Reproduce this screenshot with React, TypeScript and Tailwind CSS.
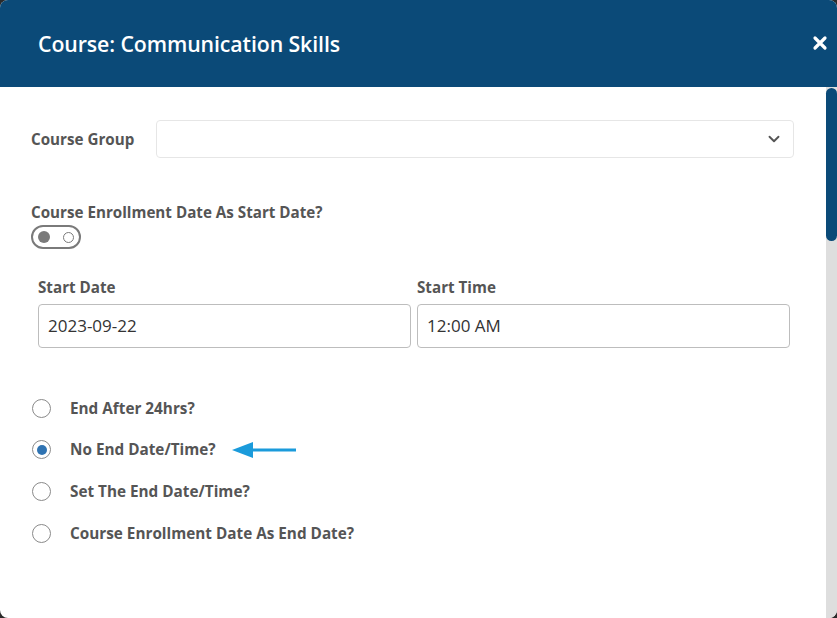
import { ChevronDown } from "lucide-react";

const font = "font-['Open_Sans',sans-serif]";

function Header() {
  return (
    <div className="bg-[#0b4a78] h-[87px] flex items-center justify-between pl-[38px] pr-[9px] shrink-0">
      <h1 className="text-white text-[21.3px] font-semibold tracking-[-0.1px]">Course: Communication Skills</h1>
      <svg width="16" height="16" viewBox="0 0 16 16" className="mb-[2px]">
        <path d="M3 3 L13 13 M13 3 L3 13" stroke="#fff" strokeWidth="3.2" strokeLinecap="round" />
      </svg>
    </div>
  );
}

function Toggle() {
  return (
    <div className="w-[50px] h-[24px] rounded-full border-2 border-[#7a7a7a] flex items-center justify-between px-[5px]">
      <span className="size-[12px] rounded-full bg-[#7a7a7a]" />
      <span className="size-[11px] rounded-full border-[1.5px] border-[#7a7a7a]" />
    </div>
  );
}

function TextField({ label, value }: { label: string; value: string }) {
  return (
    <div className="flex flex-col flex-1">
      <label className="text-[15.2px] font-bold text-[#555] leading-[20px]">{label}</label>
      <div className="mt-[7px] h-[44px] border border-[#bdbdbd] rounded-[4px] flex items-center px-[9px] text-[17px] text-[#333]">
        {value}
      </div>
    </div>
  );
}

function Radio({ label, checked }: { label: string; checked?: boolean }) {
  return (
    <div className="flex items-center h-[20px]">
      <span className="size-[19px] rounded-full border border-[#8a8a8a] flex items-center justify-center shrink-0">
        {checked && <span className="size-[10px] rounded-full bg-[#2f73b2]" />}
      </span>
      <span className="ml-[19px] text-[15.3px] font-bold text-[#555]">{label}</span>
      {checked && (
        <svg width="66" height="18" viewBox="0 0 66 18" className="ml-[16px]">
          <path d="M18 9 H64" stroke="#1b9bdb" strokeWidth="3" />
          <path d="M0 9 L21 1 L21 17 Z" fill="#1b9bdb" />
        </svg>
      )}
    </div>
  );
}

function Body() {
  return (
    <div className="flex flex-1 min-h-0">
      <div className="flex-1 pl-[31px] pr-[32px] pt-[33px]">
        <div className="flex items-center h-[38px]">
          <span className="w-[125px] text-[15.2px] font-bold text-[#555]">Course Group</span>
          <div className="flex-1 h-[38px] border border-[#e6e6e6] rounded-[4px] flex items-center justify-end pr-[10px]">
            <ChevronDown size={18} strokeWidth={2.5} color="#555" />
          </div>
        </div>
        <div className="mt-[44px] text-[15.2px] font-bold text-[#555] leading-[20px]">Course Enrollment Date As Start Date?</div>
        <div className="mt-[3px]">
          <Toggle />
        </div>
        <div className="mt-[28px] flex gap-[6px] pl-[7px] pr-[4px]">
          <TextField label="Start Date" value="2023-09-22" />
          <TextField label="Start Time" value="12:00 AM" />
        </div>
        <div className="mt-[50px] flex flex-col gap-[21.7px] pl-[1px]">
          <Radio label="End After 24hrs?" />
          <Radio label="No End Date/Time?" checked />
          <Radio label="Set The End Date/Time?" />
          <Radio label="Course Enrollment Date As End Date?" />
        </div>
      </div>
      <div className="w-[11px] bg-[#dedede] shrink-0 flex flex-col">
        <div className="h-[153px] bg-[#0b4a78] rounded-full mt-[1px]" />
      </div>
    </div>
  );
}

export default function App() {
  return (
    <div className={`${font} w-[837px] h-[618px] bg-[#2b2b2b]`}>
      <div className="w-full h-full bg-white rounded-[8px] overflow-hidden flex flex-col">
        <Header />
        <Body />
      </div>
    </div>
  );
}
